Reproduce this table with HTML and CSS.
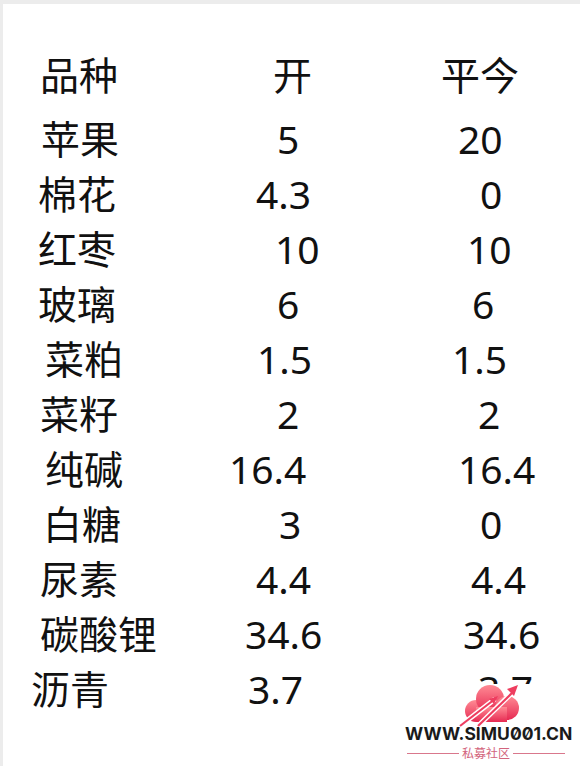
FILE: index.html
```html
<!DOCTYPE html>
<html lang="zh">
<head>
<meta charset="utf-8">
<title>品种 开 平今</title>
<link rel="stylesheet" href="styles.css">
</head>
<body>
<div class="page">
  <div class="table">
    <div class="row head"><span class="c" style="--dx:40px">品种</span><span class="c" style="--dx:53px">开</span><span class="c" style="--dx:11px">平今</span></div>
    <div class="row"><span class="c" style="--dx:41px">苹果</span><span class="c" style="--dx:57px">5</span><span class="c" style="--dx:28px">20</span></div>
    <div class="row"><span class="c" style="--dx:38px">棉花</span><span class="c" style="--dx:36px">4.3</span><span class="c" style="--dx:50px">0</span></div>
    <div class="row"><span class="c" style="--dx:38px">红枣</span><span class="c" style="--dx:55px">10</span><span class="c" style="--dx:37px">10</span></div>
    <div class="row"><span class="c" style="--dx:38px">玻璃</span><span class="c" style="--dx:57px">6</span><span class="c" style="--dx:42px">6</span></div>
    <div class="row"><span class="c" style="--dx:45px">菜粕</span><span class="c" style="--dx:37px">1.5</span><span class="c" style="--dx:22px">1.5</span></div>
    <div class="row"><span class="c" style="--dx:40px">菜籽</span><span class="c" style="--dx:57px">2</span><span class="c" style="--dx:48px">2</span></div>
    <div class="row"><span class="c" style="--dx:45px">纯碱</span><span class="c" style="--dx:9px">16.4</span><span class="c" style="--dx:28px">16.4</span></div>
    <div class="row"><span class="c" style="--dx:43px">白糖</span><span class="c" style="--dx:59px">3</span><span class="c" style="--dx:50px">0</span></div>
    <div class="row"><span class="c" style="--dx:40px">尿素</span><span class="c" style="--dx:36px">4.4</span><span class="c" style="--dx:41px">4.4</span></div>
    <div class="row"><span class="c" style="--dx:40px">碳酸锂</span><span class="c" style="--dx:25px">34.6</span><span class="c" style="--dx:33px">34.6</span></div>
    <div class="row"><span class="c" style="--dx:31px">沥青</span><span class="c" style="--dx:28px">3.7</span><span class="c" style="--dx:48px">3.7</span></div>
  </div>

  <div class="watermark">
    <svg class="logo" viewBox="0 0 72 50" width="72" height="50" aria-hidden="true">
      <defs>
        <linearGradient id="cg" x1="0" y1="0" x2="0" y2="1">
          <stop offset="0" stop-color="#ff8a94"/>
          <stop offset="1" stop-color="#e62a52"/>
        </linearGradient>
      </defs>
      <g fill="url(#cg)">
        <circle cx="22" cy="33" r="11"/>
        <circle cx="36" cy="21" r="14"/>
        <circle cx="53" cy="30" r="12"/>
        <rect x="22" y="29" width="31" height="15"/>
      </g>
      <g stroke="#fff" stroke-width="5" stroke-linecap="butt">
        <line x1="6" y1="48" x2="41" y2="21"/>
        <line x1="24" y1="48" x2="62" y2="11"/>
      </g>
      <g stroke="#ee3d5f" stroke-width="2.2">
        <line x1="6" y1="48" x2="39" y2="22.5"/>
        <line x1="24" y1="48" x2="59" y2="14"/>
      </g>
      <polygon points="64,7 53,11 60,18" fill="#ee3d5f"/>
      <polygon points="44,18 35,21 40,26" fill="#ee3d5f"/>
    </svg>
    <div class="site">WWW.SIMU001.CN</div>
    <div class="tag"><span class="line"></span><span class="tag-text">私募社区</span><span class="line"></span></div>
  </div>
</div>
</body>
</html>
```

FILE: styles.css
```css
html, body {
  margin: 0;
  padding: 0;
  background: #ffffff;
}

.page {
  position: relative;
  width: 580px;
  height: 766px;
  box-sizing: border-box;
  overflow: hidden;
  background: #ffffff;
  box-shadow: inset 3px 4px 0 #ececec;
  padding-top: 47px;
  font-family: "Noto Sans", "Noto Sans CJK SC", sans-serif;
  font-size: 39px;
  color: #111111;
}

.table {
  display: flex;
  flex-direction: column;
}

.row {
  display: grid;
  grid-template-columns: 220px 210px 1fr;
  line-height: 55px;
  height: 55px;
  white-space: nowrap;
}

.row.head {
  margin-bottom: 8.5px;
}

.c {
  padding-left: var(--dx);
}

.watermark {
  position: absolute;
  left: 400px;
  top: 684px;
  width: 180px;
  height: 82px;
  background: #ffffff;
  display: flex;
  flex-direction: column;
  align-items: flex-start;
}

.logo {
  position: absolute;
  left: 54px;
  top: -6px;
}

.site {
  margin-top: 41px;
  margin-left: 5px;
  font-family: Inter, "Noto Sans", sans-serif;
  font-weight: 700;
  font-size: 17.5px;
  line-height: 17px;
  letter-spacing: 0;
  color: #1a1a1a;
  font-feature-settings: "zero" 1;
}

.tag {
  display: flex;
  align-items: center;
  gap: 3px;
  margin-top: 4px;
  margin-left: 7px;
}

.line {
  display: block;
  width: 52px;
  height: 1px;
  background: #d9778c;
}

.tag-text {
  font-family: "Noto Sans CJK SC", sans-serif;
  font-size: 12px;
  line-height: 14px;
  color: #d2647c;
}
```
